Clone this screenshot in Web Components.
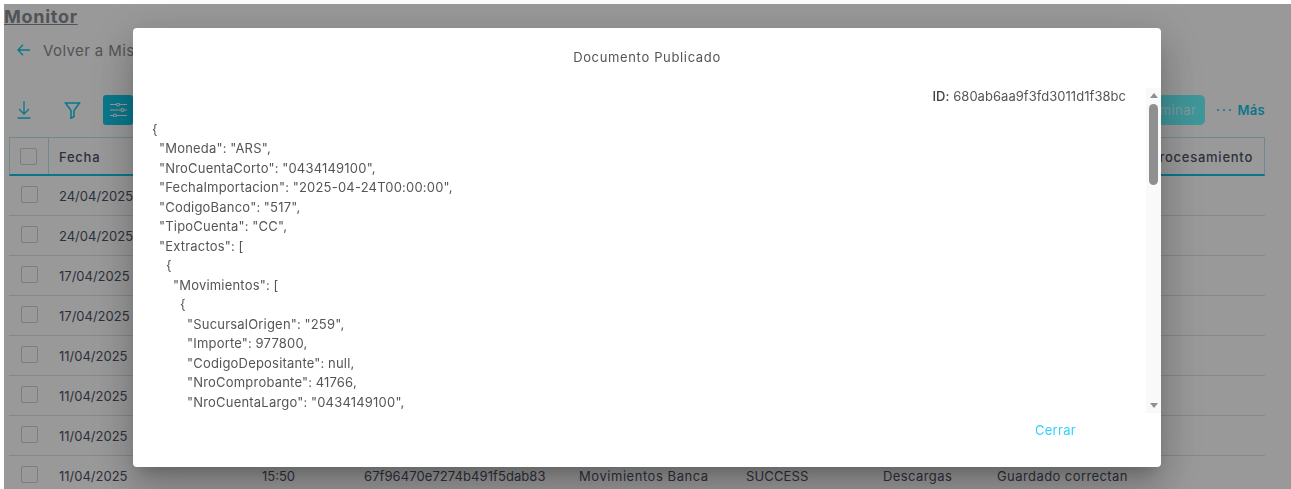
<!DOCTYPE html>
<html lang="es">
<head>
<meta charset="utf-8">
<title>Monitor</title>
<style>
  html, body { margin: 0; height: 489px; overflow: hidden; background: #fff; }
  body { font-family: Inter, "Liberation Sans", sans-serif; font-size: 13px; color: #4c5364; }
</style>
</head>
<body>
<monitor-page>
  <data-table>
    <table-row date="24/04/2025"></table-row>
    <table-row date="24/04/2025"></table-row>
    <table-row date="17/04/2025"></table-row>
    <table-row date="17/04/2025"></table-row>
    <table-row date="11/04/2025"></table-row>
    <table-row date="11/04/2025"></table-row>
    <table-row date="11/04/2025"></table-row>
    <table-row date="11/04/2025" time="15:50" doc="67f96470e7274b491f5dab83" kind="Movimientos Banca" state="SUCCESS" origin="Descargas" msg="Guardado correctan"></table-row>
  </data-table>
</monitor-page>
<modal-dialog heading="Documento Publicado" action="Cerrar">
  <json-viewer doc-id="680ab6aa9f3fd3011d1f38bc">{
  "Moneda": "ARS",
  "NroCuentaCorto": "0434149100",
  "FechaImportacion": "2025-04-24T00:00:00",
  "CodigoBanco": "517",
  "TipoCuenta": "CC",
  "Extractos": [
    {
      "Movimientos": [
        {
          "SucursalOrigen": "259",
          "Importe": 977800,
          "CodigoDepositante": null,
          "NroComprobante": 41766,
          "NroCuentaLargo": "0434149100",</json-viewer>
</modal-dialog>

<script>
class CheckBox extends HTMLElement {
  constructor() {
    super();
    const shadow = this.attachShadow({ mode: 'open' });
    shadow.innerHTML = `
      <style>
      :host {
        display: block;
        box-sizing: border-box;
        width: 17px;
        height: 17px;
        border: 1px solid #d0d0d0;
        border-radius: 2px;
      }
      </style>
    `;
  }
}

class TableRow extends HTMLElement {
  constructor() {
    super();
    const shadow = this.attachShadow({ mode: 'open' });
    const cols = ['date', 'time', 'doc', 'kind', 'state', 'origin', 'msg'];
    const cells = cols.map(c => `<span class="${c}">${this.getAttribute(c) || ''}</span>`).join('');
    shadow.innerHTML = `
      <style>
      :host {
        display: grid;
        grid-template-columns: 40px 203px 102px 215px 167px 137px 114px 140px 1fr;
        align-items: center;
        height: 40px;
        box-sizing: border-box;
        border-bottom: 1px solid #e1e1e1;
        letter-spacing: .42px;
      }
      check-box { margin-left: 12px; margin-top: -2px; }
      span {
        padding-left: 10px;
        white-space: nowrap;
        margin-top: 1px;
      }
      .date, .time { letter-spacing: 0; }
      .doc { letter-spacing: .08px; }
      .kind { letter-spacing: .55px; }
      .state { letter-spacing: .15px; }
      </style>
      <check-box></check-box>${cells}
    `;
  }
}

class DataTable extends HTMLElement {
  constructor() {
    super();
    const shadow = this.attachShadow({ mode: 'open' });
    shadow.innerHTML = `
      <style>
      :host {
        display: block;
        margin-left: 5px;
        width: 1256px;
      }
      .head {
        display: flex;
        align-items: center;
        justify-content: space-between;
        box-sizing: border-box;
        height: 39px;
        border: 1px solid #b8e6f2;
        border-bottom: 2px solid #12c4e8;
        font-weight: 500;
        letter-spacing: .75px;
      }
      .sel {
        display: flex;
        align-items: center;
        box-sizing: border-box;
        width: 39px;
        height: 100%;
        padding-left: 10px;
        border-right: 1px solid #b8e6f2;
      }
      .name { flex: 1; padding: 1px 0 0 10px; }
      .proc { padding: 1px 11px 0 0; white-space: nowrap; }
      </style>
      <div class="head">
        <div class="sel"><check-box></check-box></div>
        <span class="name">Fecha</span>
        <span class="proc">Fecha de procesamiento</span>
      </div>
      <slot></slot>
    `;
  }
}

class MonitorPage extends HTMLElement {
  constructor() {
    super();
    const shadow = this.attachShadow({ mode: 'open' });
    shadow.innerHTML = `
      <style>
      :host {
        display: block;
        padding: 4px 0 0 4px;
      }
      h1 {
        margin: 0;
        font-size: 18px;
        line-height: 26px;
        font-weight: 700;
        color: #888c90;
        text-decoration: underline;
        letter-spacing: .72px;
      }
      .back {
        display: flex;
        align-items: center;
        gap: 13px;
        height: 24px;
        margin: 8px 0 0 13px;
        font-size: 15px;
        letter-spacing: .4px;
        color: #888c90;
      }
      .tools {
        display: flex;
        align-items: center;
        height: 30px;
        margin: 33px 26px 12px 5px;
      }
      .tool {
        display: flex;
        align-items: center;
        justify-content: center;
        width: 30px;
        height: 30px;
        margin-right: 17px;
        border-radius: 3px;
      }
      .tool.on { background: #10c8ea; margin: 0; }
      .spacer { flex: 1; }
      .del {
        box-sizing: border-box;
        height: 30px;
        padding: 0 8px;
        border-radius: 5px;
        background: #68faff;
        color: #d4ffff;
        line-height: 30px;
        letter-spacing: .5px;
        white-space: nowrap;
      }
      .more {
        display: flex;
        align-items: center;
        gap: 6px;
        margin-left: 11px;
        color: #12c4e8;
        font-weight: 600;
        letter-spacing: .3px;
      }
      </style>
      <h1>Monitor</h1>
      <div class="back">
        <svg width="13" height="12" viewBox="0 0 13 12" fill="none" stroke="#12c4e8" stroke-width="1.3"><path d="M13 6H1M6 .8 1 6l5 5.2"/></svg>
        <span>Volver a Mis documentos</span>
      </div>
      <div class="tools">
        <div class="tool">
          <svg width="14" height="18" viewBox="0 0 14 18" fill="none" stroke="#12c4e8" stroke-width="1.3"><path d="M7 0v13M2 8l5 5 5-5M.5 17h13"/></svg>
        </div>
        <div class="tool">
          <svg width="17" height="17" viewBox="0 0 17 17" style="margin-left:2px" fill="none" stroke="#12c4e8" stroke-width="1.5"><path d="M1.5 1h14L10 8.5v6l-3 1.8V8.5z"/></svg>
        </div>
        <div class="tool on">
          <svg width="17" height="14" viewBox="0 0 17 14" fill="none" stroke="#fff" stroke-width="1.1"><path d="M0 1.5h17M0 7h17M0 12.5h17"/><circle cx="8" cy="1.5" r="1.5" fill="#10c8ea"/><circle cx="12.5" cy="7" r="1.5" fill="#10c8ea"/><circle cx="5" cy="12.5" r="1.5" fill="#10c8ea"/></svg>
        </div>
        <div class="spacer"></div>
        <div class="del">Eliminar</div>
        <div class="more">
          <svg width="16" height="4" viewBox="0 0 16 4" fill="#12c4e8"><circle cx="2" cy="2" r="1"/><circle cx="8" cy="2" r="1"/><circle cx="14" cy="2" r="1"/></svg>
          <span>Más</span>
        </div>
      </div>
      <slot></slot>
    `;
  }
}

class FakeScrollbar extends HTMLElement {
  constructor() {
    super();
    const shadow = this.attachShadow({ mode: 'open' });
    shadow.innerHTML = `
      <style>
      :host {
        display: flex;
        flex-direction: column;
        align-items: center;
        box-sizing: border-box;
        flex: none;
        width: 15px;
        background: #f9f9f9;
      }
      .up, .down {
        width: 0;
        height: 0;
        margin: 5px 0;
        border: 4.5px solid transparent;
        border-top: 0;
        border-bottom: 5px solid #8f8f8f;
      }
      .down {
        margin-top: auto;
        border-bottom: 0;
        border-top: 5px solid #8f8f8f;
      }
      .thumb {
        width: 9px;
        height: 81px;
        margin-top: 1px;
        border-radius: 5px;
        background: #8f8f8f;
      }
      </style>
      <div class="up"></div>
      <div class="thumb"></div>
      <div class="down"></div>
    `;
  }
}

class JsonViewer extends HTMLElement {
  constructor() {
    super();
    const shadow = this.attachShadow({ mode: 'open' });
    shadow.innerHTML = `
      <style>
      :host {
        display: flex;
        height: 325px;
        overflow: hidden;
      }
      .body {
        flex: 1;
        min-width: 0;
        padding: 0 20px 0 19px;
        overflow: hidden;
      }
      .id {
        text-align: right;
        line-height: 19.5px;
        margin-top: -1px;
        letter-spacing: .04px;
      }
      .id b { font-weight: 500; color: #3f3f3f; }
      pre {
        margin: 13px 0 0;
        font: inherit;
        line-height: 19.5px;
        letter-spacing: .2px;
        word-spacing: -.36px;
      }
      </style>
      <div class="body">
        <div class="id"><b>ID:</b> ${this.getAttribute('doc-id')}</div>
        <pre><slot></slot></pre>
      </div>
      <fake-scrollbar></fake-scrollbar>
    `;
  }
}

class ModalDialog extends HTMLElement {
  constructor() {
    super();
    const shadow = this.attachShadow({ mode: 'open' });
    shadow.innerHTML = `
      <style>
      :host {
        position: fixed;
        top: 4px;
        left: 4px;
        right: 0;
        bottom: 0;
        display: flex;
        align-items: center;
        justify-content: center;
        background: rgba(0, 0, 0, .4);
      }
      .box {
        display: flex;
        flex-direction: column;
        box-sizing: border-box;
        width: 1028px;
        height: 439px;
        margin: 2px 1px 0 0;
        border-radius: 4px;
        background: #fff;
        color: #555;
        box-shadow: 0 11px 15px -7px rgba(0,0,0,.2), 0 24px 38px 3px rgba(0,0,0,.14), 0 9px 46px 8px rgba(0,0,0,.12);
      }
      h2 {
        margin: 0;
        padding-top: 20px;
        height: 40px;
        box-sizing: border-box;
        text-align: center;
        font-size: 13px;
        line-height: 19px;
        font-weight: 400;
        letter-spacing: .65px;
      }
      .content { margin-top: 20px; }
      .foot {
        display: flex;
        justify-content: flex-end;
        padding: 8px 85px 0 0;
      }
      button {
        padding: 0;
        border: 0;
        background: none;
        font: inherit;
        line-height: 19px;
        letter-spacing: .3px;
        color: #30d2ff;
      }
      </style>
      <div class="box">
        <h2>${this.getAttribute('heading')}</h2>
        <div class="content"><slot></slot></div>
        <div class="foot"><button>${this.getAttribute('action')}</button></div>
      </div>
    `;
  }
}

customElements.define('check-box', CheckBox);
customElements.define('table-row', TableRow);
customElements.define('data-table', DataTable);
customElements.define('monitor-page', MonitorPage);
customElements.define('fake-scrollbar', FakeScrollbar);
customElements.define('json-viewer', JsonViewer);
customElements.define('modal-dialog', ModalDialog);
</script>
</body>
</html>
